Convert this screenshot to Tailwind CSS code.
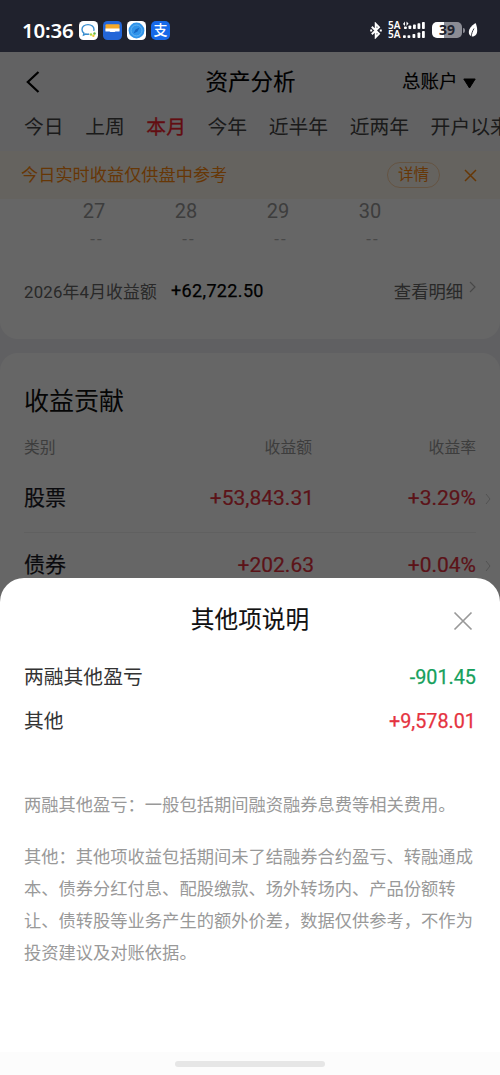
<!DOCTYPE html>
<html lang="zh-CN">
  <head>
    <meta charset="UTF-8" />
    <meta name="viewport" content="width=device-width, initial-scale=1.0" />
    <title>资产分析</title>
    <script src="https://cdn.jsdelivr.net/npm/@tailwindcss/browser@4"></script>
  </head>

  <body class="bg-[#20222d] font-['Roboto','Noto_Sans_CJK_SC',sans-serif] whitespace-nowrap">
    <div class="relative w-[500px] h-[1075px] overflow-hidden flex flex-col">
      <!-- Status bar -->
      <div class="h-[52px] shrink-0 flex items-center justify-between pl-[22px] pr-[22px] pt-2 text-white">
        <div class="flex items-center">
          <span class="w-[57px] font-['Noto_Sans',sans-serif] font-semibold text-[20.5px] leading-5 tracking-[-0.2px]">10:36</span>
          <div class="flex gap-[5px]">
            <svg width="19" height="19" viewBox="0 0 19 19">
              <rect width="19" height="19" rx="4.5" fill="#fff" />
              <path d="M9 3.600c-3.600 0-6 2.200-6 4.900 0 1.500.7 2.700 1.900 3.600l-.4 2 2.200-1.100c.7.2 1.500.3 2.300.3 3.600 0 6-2.200 6-4.800S12.600 3.600 9 3.600z" fill="#fff" stroke="#3b8fd0" stroke-width="1.400" />
              <circle cx="13.200" cy="12.600" r="3" fill="#fff" />
              <circle cx="12" cy="13.500" r="1.200" fill="#a8d63a" />
              <circle cx="14.400" cy="14.800" r="1.200" fill="#f5c52e" />
              <circle cx="15.500" cy="12.500" r="1.200" fill="#62b846" />
            </svg>
            <svg width="19" height="19" viewBox="0 0 19 19">
              <rect width="19" height="19" rx="4.500" fill="#2366d8" />
              <rect x="2.500" y="3.200" width="14" height="7" rx="1" fill="#f7a928" />
              <path d="M2.500 7.500h14V11H2.500z" fill="#fff" />
              <path d="M2 10.500h4.500c.6 0 .9 1 3 1s2.400-1 3-1H17V16H2z" fill="#2366d8" />
            </svg>
            <svg width="19" height="19" viewBox="0 0 19 19">
              <rect width="19" height="19" rx="4.500" fill="#fff" />
              <circle cx="9.500" cy="9.500" r="7.900" fill="#2f93ea" />
              <circle cx="9.500" cy="9.500" r="5.500" fill="none" stroke="#64b4f4" stroke-width="1" />
              <path d="M12.500 6.500l-2 4-4 2 2-4z" fill="#1768c4" />
            </svg>
            <span class="w-[19px] h-[19px] rounded-[5px] bg-[#1769e8] text-[14px] leading-[18px] font-medium text-center">支</span>
          </div>
        </div>
        <div class="flex items-center">
          <svg width="12" height="17" viewBox="0 0 12 17" fill="none" stroke="#fff" stroke-width="1.900">
            <path d="M1.800 4.800l7.200 7-3.300 3.400V1.800L9 5.200l-7.200 7" />
            <path d="M.2 8.500h2M9.800 8.500h2" />
          </svg>
          <div class="ml-[6px] w-[13px] flex flex-col font-['Noto_Sans',sans-serif] font-semibold text-[10px] leading-[9px]">
            <span>5A</span>
            <span>5A</span>
          </div>
          <svg class="ml-[1px]" width="24" height="18" viewBox="0 0 24 18" fill="#fff">
            <path d="M1 3l2-2.500V5zM6.500 2.500l-2 2.500V.5z" />
            <rect x="2" y="5.500" width="2.800" height="2.500" rx=".8" />
            <rect x="6.500" y="4.500" width="2.800" height="3.500" rx=".8" />
            <rect x="11" y="3.500" width="2.800" height="4.500" rx=".8" />
            <rect x="15.500" y="2.200" width="2.800" height="5.800" rx=".8" />
            <rect x="20" y="1" width="2.800" height="7" rx=".8" />
            <rect x="1" y="14.200" width="2.800" height="2.800" rx=".8" />
            <rect x="5.500" y="14.200" width="2.800" height="2.800" rx=".8" />
            <rect x="10.500" y="13" width="2.800" height="4" rx=".8" />
            <rect x="15.500" y="11.500" width="2.800" height="5.500" rx=".8" />
            <rect x="20" y="10" width="2.800" height="7" rx=".8" />
          </svg>
          <div class="ml-[6px] w-[30px] h-[16px] rounded-[5px] bg-linear-to-r from-white from-39% to-[#8b8c94] to-39% text-[#20222d] font-['Noto_Sans',sans-serif] font-bold text-[14px] leading-[16px] text-center">39</div>
          <span class="ml-[1px] w-[2px] h-[5px] rounded-r bg-[#8b8c94]"></span>
          <svg class="ml-[3px]" width="10" height="16" viewBox="0 0 10 16">
            <path d="M7.500 1C3 4 .8 7 .8 10c0 2.500 1.300 4.200 3.200 4.500C7.500 14.500 9.200 12 9.200 8.500 9.200 5.500 8.500 3 7.500 1z" fill="#fff" />
            <path d="M6 6.500C4.500 9 3.500 11.500 3 15.500" stroke="#20222d" stroke-width=".9" fill="none" />
          </svg>
        </div>
      </div>

      <!-- Page -->
      <div class="h-[1023px] shrink-0 bg-[#f1f1f5] flex flex-col overflow-hidden">
        <header class="h-[58px] shrink-0 bg-[#f5f5f8] flex items-center justify-between px-6">
          <svg class="ml-[1px] mt-[1px]" width="74" height="24" viewBox="0 0 74 24" fill="none" stroke="#000" stroke-width="2.200">
            <path d="M13.500 2L2.800 12l10.700 10" />
          </svg>
          <h1 class="pt-[3px] text-[22.500px] [-webkit-text-stroke:0.15px] text-black">资产分析</h1>
          <div class="w-[75px] pt-[3px] flex items-center text-[18.500px] [-webkit-text-stroke:0.15px] text-black -mr-[1px]">
            总账户
            <svg class="ml-[5px] mt-[1px] shrink-0" width="13" height="11" viewBox="0 0 13 11">
              <path d="M.8 1h11.400L6.500 10z" fill="#000" stroke="#000" stroke-linejoin="round" />
            </svg>
          </div>
        </header>

        <nav class="h-[41px] shrink-0 bg-[#f5f5f8] pl-6 flex gap-[21.600px] text-[19.800px] leading-[36px] text-[#444]">
          <span>今日</span>
          <span>上周</span>
          <span class="text-[#f5222d] [-webkit-text-stroke:0.3px]">本月</span>
          <span>今年</span>
          <span>近半年</span>
          <span>近两年</span>
          <span>开户以来</span>
        </nav>

        <div class="h-[48px] shrink-0 bg-[#fdf8ee] flex items-center pl-[21px] pr-[23px] text-[17.200px] text-[#ff8a10]">
          <span class="flex-1 pt-[2px]">今日实时收益仅供盘中参考</span>
          <span class="w-[53px] h-[26px] rounded-full border border-[#fbd0a4] text-[15.500px] leading-[24px] text-center">详情</span>
          <svg class="ml-[24px] mt-[1px]" width="13" height="13" viewBox="0 0 13 13" stroke="#ff8a10" stroke-width="1.500">
            <path d="M1 1l11 11M12 1L1 12" />
          </svg>
        </div>

        <!-- Calendar tail + month total -->
        <section class="h-[140px] shrink-0 bg-white rounded-b-[18px] px-6">
          <div class="h-[52px] -ml-6 pl-[48px] grid grid-cols-[repeat(4,92px)] text-center text-[#999]">
            <div>
              <p class="text-[20px] leading-6">27</p>
              <p class="pl-[6px] text-[17px] leading-8 tracking-[2px] text-[#b5b5b5]">--</p>
            </div>
            <div>
              <p class="text-[20px] leading-6">28</p>
              <p class="pl-[6px] text-[17px] leading-8 tracking-[2px] text-[#b5b5b5]">--</p>
            </div>
            <div>
              <p class="text-[20px] leading-6">29</p>
              <p class="pl-[6px] text-[17px] leading-8 tracking-[2px] text-[#b5b5b5]">--</p>
            </div>
            <div>
              <p class="text-[20px] leading-6">30</p>
              <p class="pl-[6px] text-[17px] leading-8 tracking-[2px] text-[#b5b5b5]">--</p>
            </div>
          </div>
          <div class="h-[80px] flex items-center text-[17px] text-[#666]">
            <span class="w-[147px] pt-[3px] text-[16.800px] tracking-[0.200px]">2026年4月收益额</span>
            <span class="flex-1 -mt-[1px] text-[18px] tracking-[0.350px] [-webkit-text-stroke:0.25px] text-black">+62,722.50</span>
            <span class="pt-[4px] text-[17.300px]">查看明细</span>
            <svg class="ml-[6px] -mt-[8px]" width="7" height="12" viewBox="0 0 7 12" fill="none" stroke="#b5b5b5" stroke-width="1.200">
              <path d="M1 1l5 5-5 5" />
            </svg>
          </div>
        </section>

        <!-- Contribution table -->
        <section class="mt-[14px] flex-1 bg-white rounded-t-[18px] px-6 pt-[28px]">
          <h2 class="text-[25px] leading-[42px] text-[#111]">收益贡献</h2>
          <div class="mt-[9px] grid grid-cols-[288px_164px] text-[15.800px] leading-[32px] text-[#999]">
            <div class="flex justify-between"><span>类别</span><span>收益额</span></div>
            <span class="text-right">收益率</span>
          </div>
          <div class="h-[69px] pt-[1px] border-b border-[#f0f0f0] grid grid-cols-[290px_162px_18px] items-center text-[21px] [-webkit-text-stroke:0.2px] text-[#1a1a24]">
            <div class="flex justify-between"><span>股票</span><span class="text-[#e5303e]">+53,843.31</span></div>
            <span class="text-right text-[#e5303e]">+3.29%</span>
            <svg class="ml-[9px]" width="6" height="12" viewBox="0 0 6 12" fill="none" stroke="#ccc">
              <path d="M1 1l4 5-4 5" />
            </svg>
          </div>
          <div class="h-[65px] grid grid-cols-[290px_162px_18px] items-center text-[21px] [-webkit-text-stroke:0.2px] text-[#1a1a24]">
            <div class="flex justify-between"><span>债券</span><span class="text-[#e5303e]">+202.63</span></div>
            <span class="text-right text-[#e5303e]">+0.04%</span>
            <svg class="ml-[9px]" width="6" height="12" viewBox="0 0 6 12" fill="none" stroke="#ccc">
              <path d="M1 1l4 5-4 5" />
            </svg>
          </div>
        </section>
      </div>

      <!-- Mask -->
      <div class="absolute inset-x-0 top-[52px] bottom-0 bg-black/60"></div>

      <!-- Bottom sheet -->
      <div class="absolute inset-x-0 bottom-0 h-[497px] rounded-t-[24px] bg-white overflow-hidden flex flex-col">
        <div class="h-[77px] pt-[4px] pl-[47px] pr-[27px] flex items-center">
          <h3 class="flex-1 pt-[4px] text-center text-[23.700px] [-webkit-text-stroke:0.1px] text-[#111]">其他项说明</h3>
          <svg class="mt-[5px]" width="20" height="20" viewBox="0 0 20 20" stroke="#999" stroke-width="1.700">
            <path d="M1.500 1.500l17 17M18.500 1.500l-17 17" />
          </svg>
        </div>
        <div class="pt-[1px] px-6 text-[19.800px] leading-[44px] text-[#333]">
          <div class="flex justify-between"><span>两融其他盈亏</span><span class="[-webkit-text-stroke:0.25px] text-[#16a05c]">-901.45</span></div>
          <div class="flex justify-between"><span>其他</span><span class="[-webkit-text-stroke:0.25px] text-[#e5333f]">+9,578.01</span></div>
        </div>
        <div class="mt-[45px] px-6 text-[17.280px] leading-[32px] text-[#999]">
          <p>两融其他盈亏：一般包括期间融资融券息费等相关费用。</p>
          <p class="mt-5">其他：其他项收益包括期间未了结融券合约盈亏、转融通成<br />本、债券分红付息、配股缴款、场外转场内、产品份额转<br />让、债转股等业务产生的额外价差，数据仅供参考，不作为<br />投资建议及对账依据。</p>
        </div>
        <div class="mt-auto h-[23px] bg-[#fcfcfc] flex justify-center pt-[9px]">
          <div class="w-[150px] h-[6px] rounded-full bg-[#e6e6e6]"></div>
        </div>
      </div>
    </div>
  </body>
</html>
